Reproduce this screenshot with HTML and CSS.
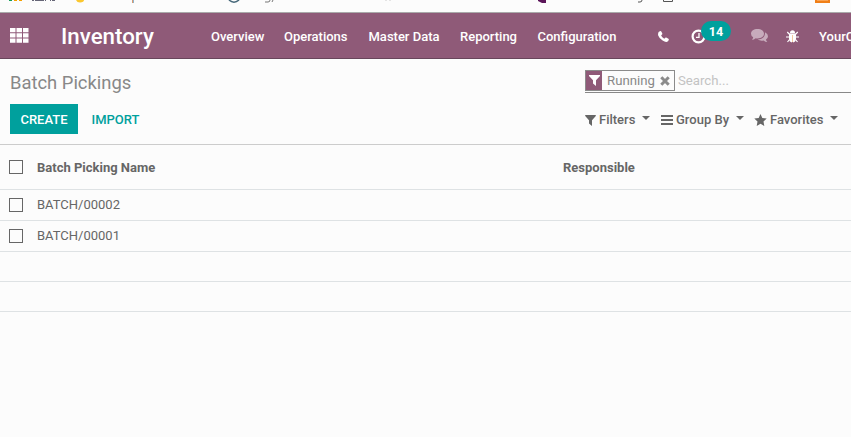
FILE: index.html
```html
<!DOCTYPE html>
<html lang="en">
<head>
<meta charset="utf-8">
<title>Batch Pickings</title>
<link rel="stylesheet" href="styles.css">
</head>
<body>
<svg class="bookmarks" width="851" height="12" viewBox="0 0 851 12">
  <path fill="#0f9d58" d="M9 0h3v1H9z"/><path fill="#f4a000" d="M14 0h3v1h-3zM19 0h3v1h-3z"/>
  <path d="M32 0h2v1h-2zM35 0h9v1h-9zM45 0h1v1h-1zM50 0h1v1h-1zM52 0h3v1h-3z" fill="#667"/>
  <path d="M76 0h8q0 2-4 2.500q-3 0-4-2.500z" fill="#fbc72e"/>
  <path d="M132.500 0v3" stroke="#d99a70"/><path d="M133.500 0v3" stroke="#8fb4cc"/>
  <path d="M229 0q5 4.500 10 0" fill="none" stroke="#456779" stroke-width="1.600"/>
  <path d="M265 2h3q2 0 2-2M273 0l-1 2" fill="none" stroke="#777"/>
  <path d="M386 0v1M390 0v1" stroke="#ccc"/>
  <path d="M538 0h8v3h-4l-4-2z" fill="#5b1559"/>
  <path d="M638 2h2q2 0 2-2M663.500 0v1.500h9V0" fill="none" stroke="#555"/>
  <path d="M815 0h15v3h-15z" fill="#f07f18"/><path d="M817 0h11v1h-11z" fill="#f9a252"/>
</svg>
<header class="navbar">
  <svg class="apps" width="19" height="15" viewBox="0 0 19 15"><path fill="#fff" d="M0 0h5.500v4.300H0zM6.500 0H12v4.300H6.500zM13 0h5.500v4.300H13zM0 5.300h5.500v4.300H0zM6.500 5.300H12v4.300H6.500zM13 5.300h5.500v4.300H13zM0 10.600h5.500v4.200H0zM6.500 10.600H12v4.200H6.500zM13 10.600h5.500v4.200H13z"/></svg>
  <h1 class="brand">Inventory</h1>
  <nav class="menu"><a class="m1">Overview</a><a class="m2">Operations</a><a class="m3">Master Data</a><a class="m4">Reporting</a><a class="m5">Configuration</a></nav>
  <div class="systray">
    <svg class="phone" width="11" height="11" viewBox="0 0 11 11"><path fill="#fff" d="M2.300.1Q3 0 3.300.6l1 2q.2.600-.3 1l-.9.900q.9 1.900 3.200 3.200l1-1q.4-.4.900-.1l2.200 1.200q.5.300.4.900-.3 1.800-2.300 2.200-1.600.2-3.900-1.300Q1.200 7.300.2 4.400-.6 1 2.300.1z"/></svg>
    <div class="activity">
      <svg width="15" height="15" viewBox="0 0 15 15"><circle cx="7.500" cy="7.500" r="5.900" fill="none" stroke="#fff" stroke-width="2.200"/><path d="M8 4v4.300H5" fill="none" stroke="#fff" stroke-width="1.300"/></svg>
      <span class="badge">14</span>
    </div>
    <svg class="chat" width="17" height="14" viewBox="0 0 17 14"><path fill="#c7abbc" d="M6.500 0C10.200 0 13 2 13 4.700S10.200 9.400 6.500 9.400q-1 0-1.800-.2Q3 10.700.9 10.800q1.200-1.100 1.300-2.500Q0 7 0 4.700C0 2 2.800 0 6.500 0zM14 3.200q3 1.500 3 4.100 0 2-2 3.300.1 1.300 1.300 2.500-2-.1-3.700-1.600-3.300.7-6-.9C11.300 10.300 14.400 7.500 14 3.200z"/></svg>
    <svg class="bug" width="13" height="13" viewBox="0 0 13 13"><path d="M1.300 2 3 4h7l1.700-2M0 7h3m7 0h3M1.500 12 3.500 9.500m6 0 2 2.500" stroke="#fff" stroke-width="1.200" fill="none"/><path d="M4 3a2.500 2.700 0 0 1 5 0zM3 3.800h7v4.700q0 3.500-3 3.900V5h-1v7.400q-3-.5-3-3.900z" fill="#fff"/><path d="M6 5h1v7H6z" fill="#f3c9a0"/></svg>
    <span class="user">YourC</span>
  </div>
</header>
<section class="control">
  <div class="left">
    <h2>Batch Pickings</h2>
    <div class="buttons"><button class="create">CREATE</button><button class="import">IMPORT</button></div>
  </div>
  <div class="right">
    <div class="search">
      <div class="facet"><span class="facet-icon"><svg width="11" height="11" viewBox="0 0 11 11"><path fill="#fff" d="M0 0h11v1L7 5.200V11L4 8.500V5.200L0 1z"/></svg></span><span class="facet-label">Running</span><svg class="remove" width="10" height="10" viewBox="0 0 10 10"><path d="m1.300 1.300 7.400 7.400m0-7.400L1.300 8.700" stroke="#8b8b8b" stroke-width="3"/></svg></div>
      <span class="placeholder">Search...</span>
    </div>
    <div class="options">
      <div class="option filters"><svg width="11" height="11" viewBox="0 0 11 11"><path fill="#666" d="M.2 0h10.600v1L7 5.200V11L4 8.500V5.200L.2 1z"/></svg><span>Filters</span><i class="caret"></i></div>
      <div class="option group"><svg width="12" height="10" viewBox="0 0 12 10"><path fill="#666" d="M0 0h12v2H0zM0 4h12v2H0zM0 8h12v2H0z"/></svg><span>Group By</span><i class="caret"></i></div>
      <div class="option fav"><svg width="13" height="12" viewBox="0 0 13 12"><path fill="#666" d="m6.500 0 1.800 3.900 4.400.6-3.200 3 .8 4.400-3.800-2.100-3.800 2.100.8-4.400-3.200-3 4.400-.6z"/></svg><span>Favorites</span><i class="caret"></i></div>
    </div>
  </div>
</section>
<main class="list">
  <div class="row head"><i class="check"></i><span class="name">Batch Picking Name</span><span>Responsible</span></div>
  <div class="row"><i class="check"></i><span class="name">BATCH/00002</span></div>
  <div class="row"><i class="check"></i><span class="name">BATCH/00001</span></div>
  <div class="row empty"></div>
  <div class="row empty"></div>
</main>
</body>
</html>
```
FILE: styles.css
```css
* { box-sizing: border-box; }
body { margin: 0; height: 437px; overflow: hidden; background: #fcfcfc; color: #666; font: 13px/20px Roboto, sans-serif; }
svg { display: block; flex: none; }
h1, h2 { margin: 0; }
.bookmarks { height: 12px; }
.navbar { display: flex; align-items: center; height: 47px; padding-left: 10px; border-top: 1px solid #aaa; border-bottom: 1px solid #68465b; background: #8f5a78; color: #fff; white-space: nowrap; overflow: hidden; }
.apps { margin-top: -1px; }
.brand { width: 150px; margin-left: 32px; padding-top: 1px; font-size: 22.300px; font-weight: 500; line-height: 30px; }
.menu { display: flex; width: 446px; padding-top: 2px; font-weight: 500; }
.m1 { width: 73px; }
.m2 { width: 84.500px; }
.m3 { width: 91.500px; }
.m4 { width: 77.500px; }
.systray { display: flex; align-items: center; width: 194px; padding-top: 1px; }
.phone { margin-left: 1px; }
.activity { position: relative; margin-left: 22px; }
.badge { position: absolute; left: 10px; top: -8px; width: 30px; height: 20px; border-radius: 10px; background: #00a09d; text-align: center; font-weight: 700; font-size: 12.500px; line-height: 21px; }
.chat { margin-left: 45px; }
.bug { margin-left: 18px; }
.user { margin-left: 20px; padding-top: 1px; font-weight: 500; }
.control { display: flex; height: 86px; border-bottom: 1px solid #ccc; }
.left { width: 585px; padding: 12px 10px 0; }
h2 { height: 33px; font-size: 18.400px; line-height: 24px; font-weight: 400; color: #888; }
.buttons { display: flex; }
button { height: 30px; padding: 0; border: 0; background: none; color: #00a09d; font: 500 13px/31px Roboto, sans-serif; }
.create { width: 68px; background: #00a09d; color: #fff; }
.import { width: 75px; }
.right { flex: 1; padding-top: 11px; }
.search { display: flex; height: 23px; border-bottom: 1px solid #888; }
.facet { display: flex; align-items: center; width: 90px; height: 21px; border: 1px solid #8b8b8b; color: #888; }
.facet-icon { display: flex; align-items: center; justify-content: center; width: 16px; height: 19px; background: #8f5a78; }
.facet-label { width: 53px; padding-left: 5px; font-size: 13.200px; }
.remove { margin-left: 5px; }
.placeholder { padding-left: 3px; color: #c3c3c3; font-size: 13.200px; line-height: 21px; }
.options { display: flex; height: 20px; margin-top: 17px; white-space: nowrap; font-weight: 500; }
.option { display: flex; align-items: center; }
.filters { width: 76px; }
.group { width: 93px; }
.option span { margin-left: 3px; }
.caret { width: 0; margin: -4px 0 0 7px; border: 4px solid transparent; border-top-color: #666; border-bottom: 0; }
.row { display: grid; grid-template-columns: 14px 512px 1fr; column-gap: 14px; align-items: center; height: 31px; padding-left: 9px; border-bottom: 1px solid #dee2e4; }
.head { height: 45px; font-weight: 700; }
.head span { padding-top: 1px; }
.check { width: 14px; height: 14px; border: 1px solid #666; }
.empty { height: 30px; }
```
